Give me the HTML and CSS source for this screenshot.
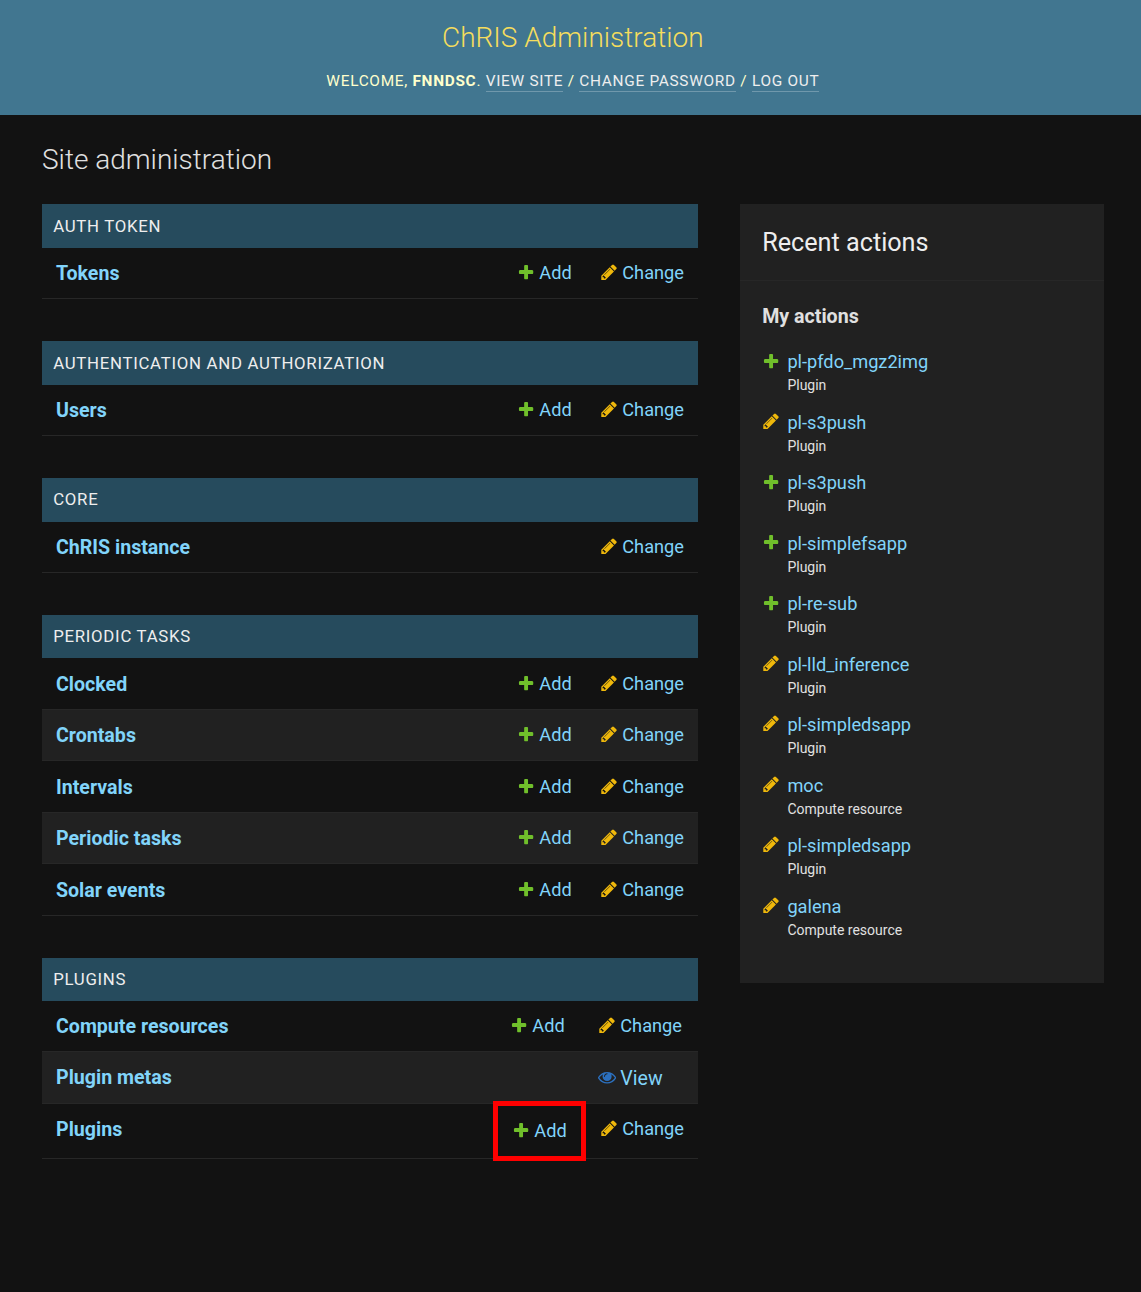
FILE: index.html
```
<!DOCTYPE html>
<html lang="en">
<head>
<meta charset="utf-8">
<title>Site administration</title>
<link rel="stylesheet" href="styles.css">
</head>
<body>
<svg class="sprite" aria-hidden="true">
<symbol id="add" viewBox="0 0 1792 1792"><path fill="#70bf2b" d="M1600 796v192q0 40-28 68t-68 28h-416v416q0 40-28 68t-68 28h-192q-40 0-68-28t-28-68v-416h-416q-40 0-68-28t-28-68v-192q0-40 28-68t68-28h416v-416q0-40 28-68t68-28h192q40 0 68 28t28 68v416h416q40 0 68 28t28 68z"/></symbol>
<symbol id="change" viewBox="0 0 1792 1792"><path fill="#efb80b" d="M491 1536l91-91-235-235-91 91v107h128v128h107zm523-928q0-22-22-22-10 0-17 7l-542 542q-7 7-7 17 0 22 22 22 10 0 17-7l542-542q7-7 7-17zm-54-192l416 416-832 832h-416v-416zm683 96q0 53-37 90l-166 166-416-416 166-165q36-38 90-38 53 0 91 38l235 234q37 39 37 91z"/></symbol>
<symbol id="view" viewBox="0 0 1792 1792"><path fill="#2b70bf" d="M1664 960q-152-236-381-353 61 104 61 225 0 185-131.500 316.500t-316.500 131.500-316.500-131.500-131.500-316.500q0-121 61-225-229 117-381 353 133 205 333.500 326.500t434.500 121.500 434.500-121.500 333.500-326.500zm-720-384q0-20-14-34t-34-14q-125 0-214.500 89.500t-89.500 214.500q0 20 14 34t34 14 34-14 14-34q0-86 61-147t147-61q20 0 34-14t14-34zm848 384q0 34-20 69-140 230-376.500 368.500t-499.500 138.500-499.500-139-376.500-368q-20-35-20-69t20-69q140-229 376.500-368t499.500-139 499.500 139 376.500 368q20 35 20 69z"/></symbol>
</svg>
<header class="header">
<h1 class="branding">ChRIS Administration</h1>
<div class="user-tools">Welcome, <strong>FNNDSC</strong>. <a>View site</a> / <a>Change password</a> / <a>Log out</a></div>
</header>
<main class="content">
<h2 class="title">Site administration</h2>
<div class="columns">
<div class="apps">
<section class="module"><h3 class="caption">Auth Token</h3>
<div class="row"><a class="name">Tokens</a><a class="link add"><svg><use href="#add"/></svg>Add</a><a class="link change"><svg><use href="#change"/></svg>Change</a></div>
</section>
<section class="module"><h3 class="caption">Authentication and Authorization</h3>
<div class="row"><a class="name">Users</a><a class="link add"><svg><use href="#add"/></svg>Add</a><a class="link change"><svg><use href="#change"/></svg>Change</a></div>
</section>
<section class="module"><h3 class="caption">Core</h3>
<div class="row"><a class="name">ChRIS instance</a><a class="link change"><svg><use href="#change"/></svg>Change</a></div>
</section>
<section class="module"><h3 class="caption">Periodic Tasks</h3>
<div class="row"><a class="name">Clocked</a><a class="link add"><svg><use href="#add"/></svg>Add</a><a class="link change"><svg><use href="#change"/></svg>Change</a></div>
<div class="row alt"><a class="name">Crontabs</a><a class="link add"><svg><use href="#add"/></svg>Add</a><a class="link change"><svg><use href="#change"/></svg>Change</a></div>
<div class="row"><a class="name">Intervals</a><a class="link add"><svg><use href="#add"/></svg>Add</a><a class="link change"><svg><use href="#change"/></svg>Change</a></div>
<div class="row alt"><a class="name">Periodic tasks</a><a class="link add"><svg><use href="#add"/></svg>Add</a><a class="link change"><svg><use href="#change"/></svg>Change</a></div>
<div class="row"><a class="name">Solar events</a><a class="link add"><svg><use href="#add"/></svg>Add</a><a class="link change"><svg><use href="#change"/></svg>Change</a></div>
</section>
<section class="module"><h3 class="caption">Plugins</h3>
<div class="row shifted"><a class="name">Compute resources</a><a class="link add"><svg><use href="#add"/></svg>Add</a><a class="link change"><svg><use href="#change"/></svg>Change</a></div>
<div class="row alt"><a class="name">Plugin metas</a><a class="link view"><svg><use href="#view"/></svg>View</a></div>
<div class="row tall"><a class="name">Plugins</a><a class="link add"><svg><use href="#add"/></svg>Add</a><a class="link change"><svg><use href="#change"/></svg>Change</a><span class="highlight"></span></div>
</section>
</div>
<aside class="recent">
<h2 class="recent-title">Recent actions</h2>
<h3 class="recent-sub">My actions</h3>
<ul class="actions">
<li><svg><use href="#add"/></svg><a>pl-pfdo_mgz2img</a><small>Plugin</small></li>
<li><svg><use href="#change"/></svg><a>pl-s3push</a><small>Plugin</small></li>
<li><svg><use href="#add"/></svg><a>pl-s3push</a><small>Plugin</small></li>
<li><svg><use href="#add"/></svg><a>pl-simplefsapp</a><small>Plugin</small></li>
<li><svg><use href="#add"/></svg><a>pl-re-sub</a><small>Plugin</small></li>
<li><svg><use href="#change"/></svg><a>pl-lld_inference</a><small>Plugin</small></li>
<li><svg><use href="#change"/></svg><a>pl-simpledsapp</a><small>Plugin</small></li>
<li><svg><use href="#change"/></svg><a>moc</a><small>Compute resource</small></li>
<li><svg><use href="#change"/></svg><a>pl-simpledsapp</a><small>Plugin</small></li>
<li><svg><use href="#change"/></svg><a>galena</a><small>Compute resource</small></li>
</ul>
</aside>
</div>
</main>
</body>
</html>
```
FILE: styles.css
```
* { box-sizing: border-box; }
body {
  margin: 0;
  min-height: 1292px;
  background: #121212;
  color: #eee;
  font-family: Roboto, "Liberation Sans", sans-serif;
  font-size: 18.2px;
}
h1, h2, h3 { margin: 0; }
.sprite { display: none; }

.header {
  height: 115px;
  padding: 20px 0 0 4.6px;
  background: #417690;
  color: #ffc;
  text-align: center;
}
.branding {
  font-size: 28px;
  line-height: 36px;
  font-weight: 300;
  color: #f5dd5d;
}
.user-tools {
  margin-top: 14px;
  font-size: 15.4px;
  line-height: 22px;
  letter-spacing: 0.7px;
  text-transform: uppercase;
}
.user-tools a {
  padding-bottom: 1px;
  color: #eee;
  border-bottom: 1px solid rgba(255, 255, 255, 0.25);
}

.content { padding: 28px 37px 0 42px; }
.title {
  height: 61.2px;
  font-size: 28px;
  line-height: 34px;
  font-weight: 300;
  color: #e0e0e0;
}
.columns {
  display: flex;
  justify-content: space-between;
  align-items: flex-start;
}
.apps { width: 656px; }
.module { margin-bottom: 41.65px; }
.caption {
  height: 43.7px;
  padding: 0.65px 0 0 11.2px;
  background: #264b5d;
  font-size: 16.8px;
  line-height: 43.4px;
  font-weight: 400;
  letter-spacing: 0.72px;
  text-transform: uppercase;
}
.row {
  position: relative;
  display: flex;
  height: 51.5px;
  padding-left: 14px;
  border-bottom: 1px solid #272727;
  line-height: 50.8px;
}
.row.alt { background: #212121; }
.row.shifted { height: 51px; }
.row.tall { height: 55px; }
.name {
  flex: 1;
  padding-top: 1.15px;
  font-size: 19.6px;
  font-weight: 700;
  color: #81d4fa;
}
.link {
  display: flex;
  padding-top: 0.15px;
  color: #81d4fa;
}
.link svg {
  width: 18.2px;
  height: 18.2px;
  margin: 15.1px 4.1px 0 0;
}
.add { width: 83px; }
.change { width: 98px; }
.shifted .add { width: 88px; }
.shifted .change { width: 100px; }
.view {
  width: 100px;
  padding-top: 1.5px;
  font-size: 19.6px;
}
.view svg { margin-top: 14px; }
.tall .add { width: 88px; padding-top: 2px; }
.highlight {
  position: absolute;
  left: 451px;
  top: -3px;
  width: 93px;
  height: 60px;
  border: 5px solid #f00;
}

.recent {
  width: 364px;
  height: 779px;
  background: #212121;
}
.recent-title {
  height: 77px;
  padding: 23px 22.2px 0;
  border-bottom: 1px solid #272727;
  font-size: 25.2px;
  line-height: 32px;
  font-weight: 400;
}
.recent-sub {
  padding: 23px 22.2px 0;
  font-size: 19.6px;
  line-height: 26px;
  font-weight: 700;
  color: #e0e0e0;
}
.actions {
  margin: 0;
  padding: 20.3px 22px 0;
  list-style: none;
}
.actions li {
  display: grid;
  grid-template-columns: 25.4px 1fr;
  grid-template-rows: 25px 20px;
  height: 60.47px;
}
.actions svg {
  width: 18.2px;
  height: 18.2px;
  margin-top: 1.2px;
}
.actions a {
  line-height: 24px;
  color: #81d4fa;
}
.actions small {
  grid-column: 2;
  font-size: 14px;
  line-height: 20px;
  color: #e0e0e0;
}
```
